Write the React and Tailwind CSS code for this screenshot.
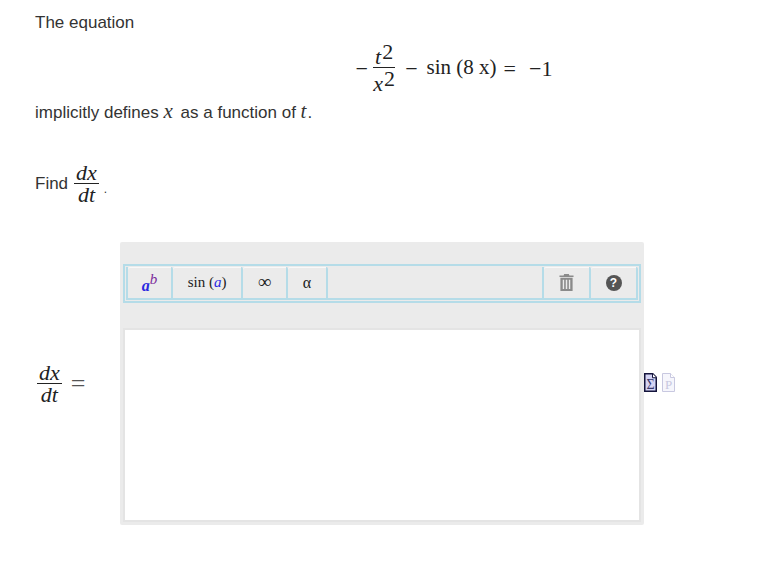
const serif = "font-['Liberation_Serif',serif]";

const Fraction = ({ top, bottom, className = "", gap = "" }) => (
  <span className={`inline-flex flex-col items-center align-middle ${className}`}>
    <span className={`border-b border-[#222] px-[2px] leading-[21px] ${gap && "pt-[5px]"}`}>{top}</span>
    <span className={`leading-[22px] ${gap && "pt-[5px]"}`}>{bottom}</span>
  </span>
);

const V = ({ children, className = "" }) => <i className={`${serif} text-[21px] leading-none ${className}`}>{children}</i>;

const Power = ({ base }) => (
  <>
    <i>{base}</i>
    <span className="relative top-[-5px] ml-[1px]">2</span>
  </>
);

const ToolButton = ({ width, children }) => (
  <button className={`${width} flex h-full items-center justify-center rounded-t-[2px] border-r-2 border-[#b5dce8] shadow-[inset_0_1px_0_#f8f8f8] ${serif}`}>
    {children}
  </button>
);

const App = () => {
  return (
    <div className="h-[574px] w-[769px] overflow-hidden bg-white pl-[35px] pt-[14px] font-['Liberation_Sans',sans-serif] text-[17px] text-[#333]">
      <p className="leading-[18px]">The equation</p>

      <div className={`mt-[9px] flex h-[54px] w-[838px] items-center justify-center text-[22px] text-[#222] ${serif}`}>
        <span className="mr-[5px]">−</span>
        <Fraction gap="wide" top={<Power base="t" />} bottom={<Power base="x" />} />
        <span className="ml-[10px]">−</span>
        <span className="ml-[9px] text-[21px]">sin (8 x)</span>
        <span className="ml-[7px]">=</span>
        <span className="ml-[13px]">−1</span>
      </div>

      <p className="mt-[6px] h-[18px] leading-[18px]">
        implicitly defines <V className="mr-[3px]">x</V> as a function of <V className="mr-[1px]">t</V>.
      </p>

      <div className="mt-[43px] flex h-[44px] items-center">
        <span>Find</span>
        <Fraction className={`ml-[6px] text-[22px] text-[#222] ${serif}`} top={<i>dx</i>} bottom={<i>dt</i>} />
        <span className="ml-[5px] mt-[9px] text-[12px]">.</span>
      </div>

      <div className="mt-[36px] flex items-center">
        <div className={`flex w-[85px] items-center text-[22px] text-[#222] ${serif}`}>
          <Fraction className="ml-[2px]" top={<i>dx</i>} bottom={<i>dt</i>} />
          <span className="ml-[9px] text-[26px] leading-none text-[#555]">=</span>
        </div>

        <div className="h-[283px] w-[524px] rounded-[2px] bg-[#ebebeb] pt-[22px]">
          <div className="mx-[3px] h-[39px] border-2 border-[#b5dce8] p-[1px]">
            <div className="flex h-[33px] border-b-2 border-l-2 border-[#b5dce8]">
              <ToolButton width="w-[45px]">
                <span className="relative top-[3px] text-[16px] font-bold italic text-[#2a2ae0]">
                  a<span className="relative top-[-7px] text-[15px] font-normal text-[#7a2a9a]">b</span>
                </span>
              </ToolButton>
              <ToolButton width="w-[70px]">
                <span className="text-[15px] text-[#222]">
                  sin (<i className="text-[#2a2ae0]">a</i>)
                </span>
              </ToolButton>
              <ToolButton width="w-[45px]">
                <span className="text-[19px] text-[#222]">∞</span>
              </ToolButton>
              <ToolButton width="w-[40px]">
                <span className="text-[16px] text-[#222]">α</span>
              </ToolButton>
              <div className="flex-1 border-r-2 border-[#b5dce8]" />
              <ToolButton width="w-[47px]">
                <svg width="15" height="17" viewBox="0 0 16 18" fill="#8a8a8a">
                  <path d="M5.5 0h5l.6 1.5H15.500V3H.5V1.500h4.400z" />
                  <path d="M1.500 4h13v14h-13zM4 6v10h1.500V6zm3.200 0v10h1.600V6zm3.300 0v10H12V6z" fillRule="evenodd" />
                </svg>
              </ToolButton>
              <ToolButton width="w-[47px]">
                <span className="flex h-[16px] w-[16px] items-center justify-center rounded-full bg-[#555] font-['Liberation_Sans',sans-serif] text-[12px] font-bold text-white">
                  ?
                </span>
              </ToolButton>
            </div>
          </div>
          <div className="mx-[3px] mt-[25px] h-[194px] border-2 border-[#e4e4e4] bg-white" />
        </div>

        <div className="mb-[2px] flex items-center gap-[5px]">
          <svg width="13" height="19" viewBox="0 0 13 19">
            <path d="M.75.750h8l3.500 3.500v14H.75z" fill="#d4d4f4" stroke="#14143c" strokeWidth="1.500" />
            <path d="M8.500.750v4h4" fill="#fff" stroke="#14143c" />
            <text x="6.500" y="16" textAnchor="middle" fontSize="14" fontFamily="Liberation Serif" fill="#3a3a6c">Σ</text>
          </svg>
          <svg width="13" height="19" viewBox="0 0 13 19">
            <path d="M.5.500h8l4 4v14H.5z" fill="#f6f6fc" stroke="#c8c8e0" />
            <path d="M8.500.500v4h4" fill="#fff" stroke="#c8c8e0" />
            <text x="6.500" y="16" textAnchor="middle" fontSize="13" fontFamily="Liberation Serif" fill="#c8c8e0">P</text>
          </svg>
        </div>
      </div>
    </div>
  );
};

export default App;
